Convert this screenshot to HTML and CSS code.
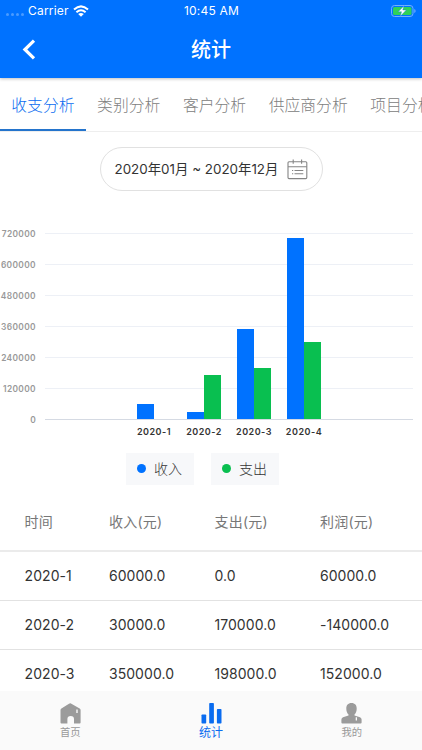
FILE: index.html
```html
<!DOCTYPE html>
<html lang="zh-CN">
<head>
    <meta charset="UTF-8">
    <meta name="viewport" content="width=device-width, initial-scale=1.0">
    <title>统计</title>
    <link rel="stylesheet" href="styles.css">
</head>
<body>
<div class="app">
    <header class="header">
        <div class="status">
            <div class="carrier">
                <span class="signal"><i></i><i></i><i></i><i></i></span>
                <span>Carrier</span>
                <svg class="wifi" width="16" height="12" viewBox="0 0 16 12" fill="none" stroke="#fff" stroke-width="2">
                    <path d="M1 4.6Q8-1.9 15 4.6"/>
                    <path d="M3.4 7.3Q8 3.2 12.6 7.3"/>
                    <path d="M5.2 9Q8 6.8 10.8 9L8 11.8Z" fill="#fff" stroke="none"/>
                </svg>
            </div>
            <span class="clock">10:45 AM</span>
            <svg class="battery" width="26" height="12" viewBox="0 0 26 12">
                <rect x=".5" y=".5" width="21.5" height="11" rx="3" fill="none" stroke="#72b0ff"/>
                <rect x="2" y="2" width="18.5" height="8" rx="1.5" fill="#30d158"/>
                <path d="M23.3 4v4q1.3-.6 1.3-2t-1.3-2" fill="#72b0ff"/>
                <path d="M13 .8 7.2 6.8h3.3L9.3 11.3l6-6.3h-3.5z" fill="#fff" stroke="#1677df" stroke-width=".4"/>
            </svg>
        </div>
        <div class="title-bar">
            <svg class="back" width="14" height="22" viewBox="0 0 14 22" fill="none" stroke="#fff" stroke-width="3.2">
                <path d="M12 1.7 2.9 10.5l9.1 8.8"/>
            </svg>
            <h1>统计</h1>
        </div>
    </header>

    <nav class="tabs">
        <a class="tab active">收支分析</a>
        <a class="tab">类别分析</a>
        <a class="tab">客户分析</a>
        <a class="tab">供应商分析</a>
        <a class="tab">项目分析</a>
    </nav>

    <main class="content">
        <div class="date-range">
            <span>2020年01月 ~ 2020年12月</span>
            <svg width="21" height="21" viewBox="0 0 21 21" fill="none" stroke="#858585" stroke-width="1.1">
                <rect x="1" y="2.8" width="18.8" height="16.8" rx="1"/>
                <path d="M1 7.8h18.8M6.2.5v4.3M14.6.5v4.3M5 11.5h1.2M7.5 11.5h8.8M5 14.8h1.2M7.5 14.8h8.8"/>
            </svg>
        </div>

        <section class="chart">
            <div class="y-axis">
                <span>720000</span>
                <span>600000</span>
                <span>480000</span>
                <span>360000</span>
                <span>240000</span>
                <span>120000</span>
                <span>0</span>
            </div>
            <div class="plot">
                <div class="lines"><i></i><i></i><i></i><i></i><i></i><i></i></div>
                <div class="bars">
                    <div class="group"><b class="income" style="height: 8.33%"></b><b class="expense" style="height: 0%"></b></div>
                    <div class="group"><b class="income" style="height: 4.17%"></b><b class="expense" style="height: 23.61%"></b></div>
                    <div class="group"><b class="income" style="height: 48.61%"></b><b class="expense" style="height: 27.5%"></b></div>
                    <div class="group"><b class="income" style="height: 97.22%"></b><b class="expense" style="height: 41.67%"></b></div>
                </div>
            </div>
            <div class="x-axis">
                <span>2020-1</span>
                <span>2020-2</span>
                <span>2020-3</span>
                <span>2020-4</span>
            </div>
        </section>

        <div class="legend">
            <span class="legend-item"><i class="dot income"></i>收入</span>
            <span class="legend-item"><i class="dot expense"></i>支出</span>
        </div>

        <div class="table">
            <div class="row head"><span>时间</span><span>收入(元)</span><span>支出(元)</span><span>利润(元)</span></div>
            <div class="row"><span>2020-1</span><span>60000.0</span><span>0.0</span><span>60000.0</span></div>
            <div class="row"><span>2020-2</span><span>30000.0</span><span>170000.0</span><span>-140000.0</span></div>
            <div class="row"><span>2020-3</span><span>350000.0</span><span>198000.0</span><span>152000.0</span></div>
        </div>
    </main>

    <footer class="tabbar">
        <a class="item">
            <svg width="21" height="21" viewBox="0 0 21 21" fill="#9b9b9b">
                <path fill-rule="evenodd" d="M10.5.3L19.7 5.5Q20.6 6 20.6 7V19.5Q20.6 20.5 19.6 20.5H14V16Q14 13 10.7 13T7.4 16V20.5H1.5Q.5 20.5.5 19.5V7Q.5 6 1.4 5.5L9 .7Q9.8.2 10.5.3ZM16.3 6.5V10H17.7V6.5Z"/>
            </svg>
            <span>首页</span>
        </a>
        <a class="item active">
            <svg width="21" height="21" viewBox="0 0 21 21" fill="#0a6cf0">
                <rect x=".5" y="11.5" width="4.7" height="9" rx=".8"/>
                <rect x="8.2" y="0" width="4.7" height="20.5" rx=".8"/>
                <rect x="15.9" y="6" width="4.6" height="14.5" rx=".8"/>
            </svg>
            <span>统计</span>
        </a>
        <a class="item">
            <svg width="21" height="21" viewBox="0 0 21 21" fill="#9b9b9b">
                <path fill-rule="evenodd" d="M10.5 0C14 0 15.7 2.3 15.7 5.4C15.7 8 14.9 10.3 13.5 11.5V12.5L19 14.2Q20.6 14.9 20.6 16.5V19.5Q20.6 20.5 19.6 20.5H1.4Q.4 20.5.4 19.5V16.5Q.4 14.9 2 14.2L7.5 12.5V11.5C6.1 10.3 5.3 8 5.3 5.4C5.3 2.3 7 0 10.5 0ZM14.7 14.3V17.6H16V14.3Z"/>
            </svg>
            <span>我的</span>
        </a>
    </footer>
</div>
</body>
</html>
```

FILE: styles.css
```css
* {
    box-sizing: border-box;
}

body {
    margin: 0;
    background: #fff;
    font-family: Inter, "Noto Sans CJK SC", sans-serif;
    color: #333;
}

.app {
    display: flex;
    flex-direction: column;
    width: 422px;
    height: 750px;
    overflow: hidden;
}

/* header */
.header {
    flex: none;
    height: 78px;
    background: #0072ff;
    color: #fff;
    box-shadow: 0 1px 3px rgba(0, 0, 0, 0.25);
    z-index: 1;
}

.status {
    display: grid;
    grid-template-columns: 1fr auto 1fr;
    align-items: center;
    height: 21px;
    padding: 0 5px 0 6px;
    font-size: 12px;
    letter-spacing: 0.2px;
}

.carrier {
    display: flex;
    align-items: center;
}

.signal {
    display: flex;
    gap: 2px;
    margin: 7px 4px 0 0;
}

.signal i {
    width: 3px;
    height: 3px;
    border-radius: 50%;
    background: #4a9bff;
}

.wifi {
    margin-left: 4px;
}

.battery {
    justify-self: end;
}

.title-bar {
    display: grid;
    grid-template-columns: 60px 1fr 60px;
    align-items: center;
    height: 57px;
}

.back {
    margin-left: 22px;
}

.title-bar h1 {
    margin: 0;
    text-align: center;
    font-size: 20px;
    font-weight: 500;
    line-height: 28px;
}

/* tabs */
.tabs {
    display: flex;
    flex: none;
    height: 54px;
    overflow: hidden;
    border-bottom: 1px solid #eee;
}

.tab {
    flex: none;
    height: 53px;
    padding: 0 11.3px;
    line-height: 56px;
    font-size: 15.8px;
    font-weight: 300;
    color: #808080;
}

.tab.active {
    color: #0a6cf0;
    border-bottom: 2px solid #2474cc;
}

.content {
    flex: 1;
    min-height: 0;
    overflow: hidden;
}

.date-range {
    display: flex;
    align-items: center;
    justify-content: space-between;
    width: 223px;
    height: 44px;
    margin: 15px auto 0;
    padding: 0 14px;
    border: 1px solid #e1e1e1;
    border-radius: 22px;
    font-size: 13.4px;
    white-space: nowrap;
}

.date-range span {
    margin-top: -2px;
}

.date-range svg {
    margin-top: 1px;
}

/* chart */
.chart {
    display: grid;
    grid-template-columns: 36px 368px;
    column-gap: 9px;
    margin-top: 27px;
}

.y-axis {
    display: flex;
    flex-direction: column;
    padding-top: 1px;
    font-size: 8.4px;
    font-weight: 600;
    color: #999;
    letter-spacing: 0.35px;
    text-align: right;
}

.y-axis span {
    height: 31.08px;
    line-height: 31.08px;
}

.plot {
    display: grid;
    height: 187px;
    margin-top: 15px;
    border-bottom: 1px solid #d5dae3;
}

.lines,
.bars {
    grid-area: 1 / 1;
}

.lines i {
    display: block;
    height: 31.08px;
    border-top: 1px solid #edf0f6;
}

.bars {
    display: flex;
    gap: 16px;
    padding-left: 92.3px;
}

.group {
    display: flex;
    align-items: flex-end;
    width: 34px;
}

.group b {
    width: 17px;
}

.income {
    background: #0072ff;
}

.expense {
    background: #09bf50;
}

.x-axis {
    grid-column: 2;
    display: flex;
    margin-top: -12px;
    padding-left: 84px;
    font-size: 9px;
    font-weight: 600;
    letter-spacing: 0.5px;
    line-height: 14px;
}

.x-axis span {
    width: 50px;
    text-align: center;
}

.legend {
    display: flex;
    justify-content: center;
    gap: 17px;
    margin: 14px 0 0 -17px;
}

.legend-item {
    display: flex;
    align-items: center;
    gap: 8px;
    width: 68px;
    height: 32px;
    padding: 0 0 1px 11px;
    background: #f7f8fa;
    font-size: 14px;
    font-weight: 300;
}

.dot {
    width: 9px;
    height: 9px;
    border-radius: 50%;
}

/* table */
.table {
    margin-top: 8px;
}

.row {
    display: grid;
    grid-template-columns: 84.4px repeat(3, 105.5px);
    align-items: center;
    height: 49px;
    padding-left: 24.6px;
    border-bottom: 1px solid #e2e2e2;
    font-size: 14px;
    letter-spacing: 0.05px;
}

.row.head {
    height: 59px;
    color: #777;
    letter-spacing: 0.2px;
    border-bottom: 2px solid #ebebeb;
}

/* bottom bar */
.tabbar {
    display: flex;
    flex: none;
    height: 59px;
    background: #fafafa;
}

.tabbar .item {
    display: flex;
    flex: 1;
    flex-direction: column;
    align-items: center;
    padding-top: 12px;
    font-size: 10.3px;
    line-height: 17px;
    color: #999;
}

.tabbar .active {
    font-size: 12px;
    color: #0a6cf0;
}
```
